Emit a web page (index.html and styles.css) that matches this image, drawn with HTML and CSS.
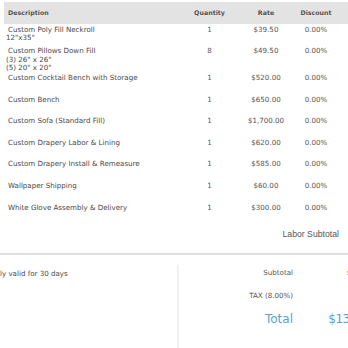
FILE: index.html
```html
<!DOCTYPE html>
<html>
<head>
<meta charset="utf-8">
<link rel="stylesheet" href="styles.css">
</head>
<body>
<div class="page">
  <div class="items">
    <div class="row head">
      <div class="c-desc">Description</div>
      <div class="c-num">Quantity</div>
      <div class="c-num">Rate</div>
      <div class="c-num">Discount</div>
    </div>
    <div class="row">
      <div class="c-desc">Custom Poly Fill Neckroll<div class="detail">12"x35"</div></div>
      <div class="c-num">1</div>
      <div class="c-num">$39.50</div>
      <div class="c-num">0.00%</div>
    </div>
    <div class="row">
      <div class="c-desc">Custom Pillows Down Fill<div class="detail">(3) 26" x 26"</div><div class="detail">(5) 20" x 20"</div></div>
      <div class="c-num">8</div>
      <div class="c-num">$49.50</div>
      <div class="c-num">0.00%</div>
    </div>
    <div class="row">
      <div class="c-desc">Custom Cocktail Bench with Storage</div>
      <div class="c-num">1</div>
      <div class="c-num">$520.00</div>
      <div class="c-num">0.00%</div>
    </div>
    <div class="row">
      <div class="c-desc">Custom Bench</div>
      <div class="c-num">1</div>
      <div class="c-num">$650.00</div>
      <div class="c-num">0.00%</div>
    </div>
    <div class="row">
      <div class="c-desc">Custom Sofa (Standard Fill)</div>
      <div class="c-num">1</div>
      <div class="c-num">$1,700.00</div>
      <div class="c-num">0.00%</div>
    </div>
    <div class="row">
      <div class="c-desc">Custom Drapery Labor &amp; Lining</div>
      <div class="c-num">1</div>
      <div class="c-num">$620.00</div>
      <div class="c-num">0.00%</div>
    </div>
    <div class="row">
      <div class="c-desc">Custom Drapery Install &amp; Remeasure</div>
      <div class="c-num">1</div>
      <div class="c-num">$585.00</div>
      <div class="c-num">0.00%</div>
    </div>
    <div class="row">
      <div class="c-desc">Wallpaper Shipping</div>
      <div class="c-num">1</div>
      <div class="c-num">$60.00</div>
      <div class="c-num">0.00%</div>
    </div>
    <div class="row">
      <div class="c-desc">White Glove Assembly &amp; Delivery</div>
      <div class="c-num">1</div>
      <div class="c-num">$300.00</div>
      <div class="c-num">0.00%</div>
    </div>
  </div>
  <div class="labor">Labor Subtotal</div>
  <div class="sep"></div>
  <div class="footer">
    <div class="notes">ly valid for 30 days</div>
    <div class="totals">
      <div class="t-label">Subtotal</div>
      <div class="t-value strong">$12,800.00</div>
      <div class="t-label">TAX (8.00%)</div>
      <div class="t-value">$1,024.00</div>
      <div class="t-label total">Total</div>
      <div class="t-value total">$13,824.00</div>
    </div>
  </div>
</div>
</body>
</html>
```
FILE: styles.css
```css
html, body {
  margin: 0;
  padding: 0;
  background: #ffffff;
}
body {
  width: 348px;
  height: 348px;
  overflow: hidden;
  font-family: "DejaVu Sans", sans-serif;
  font-size: 7.1px;
  color: #474747;
}
.page {
  width: 420px;
}
.items {
  padding-top: 2px;
}
.row {
  display: grid;
  grid-template-columns: 181px 49px 64px 36px;
  margin-left: 4px;
  box-sizing: border-box;
  min-height: 21.6px;
  padding-top: 2.25px;
  line-height: 8.5px;
  align-items: start;
}
.row.head {
  min-height: 20px;
  height: 21.5px;
  padding-top: 0;
  background: #e3e3e3;
  align-items: center;
  font-weight: bold;
  font-size: 6.3px;
  color: #555555;
}
.c-desc {
  padding-left: 4px;
}
.detail {
  margin-left: -2px;
  line-height: 8px;
}
.c-num {
  text-align: center;
  white-space: nowrap;
  color: #555555;
}
.labor {
  font-family: "Liberation Sans", Arial, sans-serif;
  font-size: 8.7px;
  color: #555555;
  width: 339px;
  text-align: right;
  line-height: 10px;
  margin-top: 5.95px;
}
.sep {
  height: 2px;
  background: #dedede;
  margin-top: 14.5px;
}
.footer {
  display: grid;
  grid-template-columns: 177px 230px;
  line-height: 8.5px;
}
.notes {
  padding-top: 15px;
}
.totals {
  margin-top: 7px;
  height: 86px;
  background-image: linear-gradient(#f0f0f0, #f0f0f0);
  background-repeat: no-repeat;
  background-size: 2px calc(100% - 3px);
  background-position: 0 3px;
  padding-left: 2px;
  display: grid;
  grid-template-columns: 114px 99px;
  grid-auto-rows: 22.5px;
  align-content: start;
  align-items: center;
}
.t-label {
  text-align: right;
  color: #555555;
}
.t-value {
  text-align: right;
  white-space: nowrap;
  color: #444444;
}
.t-value.strong {
  font-weight: bold;
  color: #333333;
}
.total {
  font-size: 12px;
  color: #5a9fd6;
  line-height: 14px;
}
.t-value.total {
  letter-spacing: -0.5px;
}
```
